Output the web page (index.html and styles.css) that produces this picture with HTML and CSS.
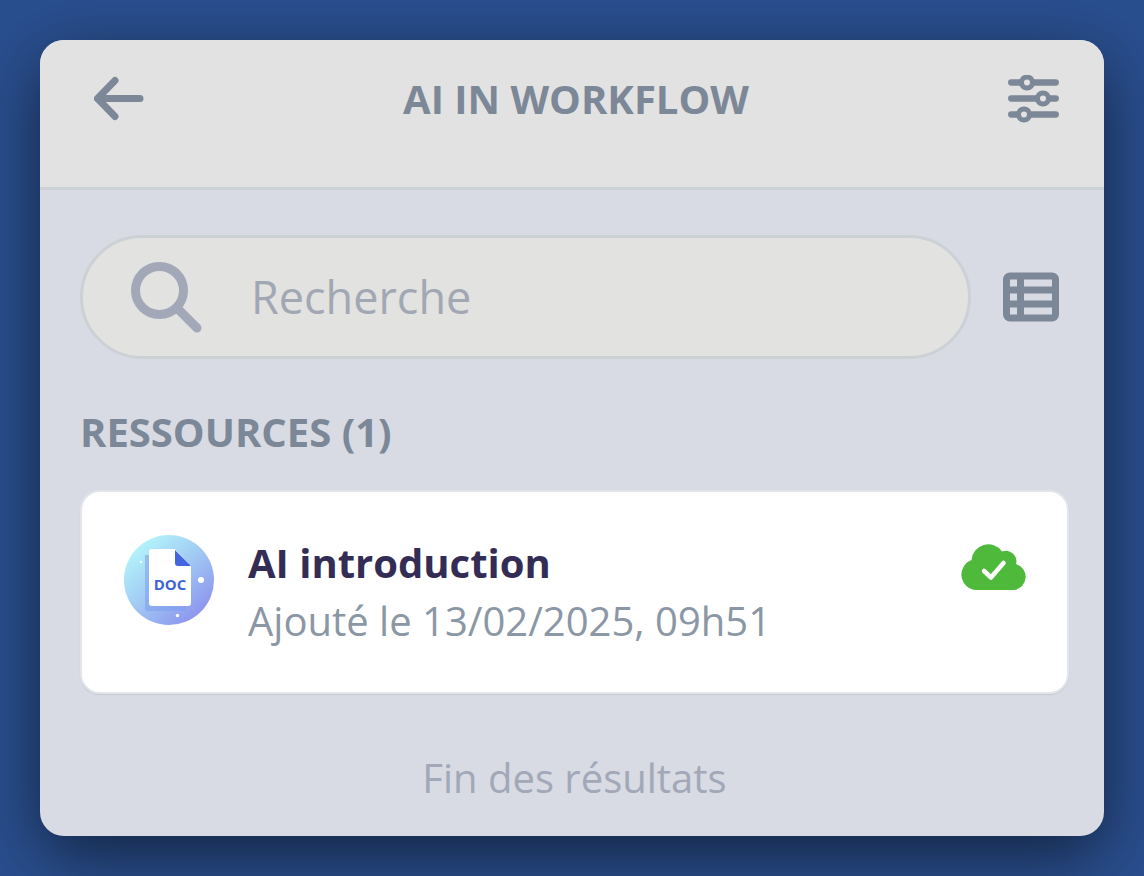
FILE: index.html
```
<!DOCTYPE html>
<html lang="fr">
<head>
	<title>AI in workflow</title>
	<meta charset="UTF-8">
	<link rel="stylesheet" href="styles.css">
</head>
<body>

<main class="panel">
	<header class="topbar">
		<button class="icon-button" type="button" aria-label="Retour">
			<svg width="50" height="48" viewBox="0 0 50 48" fill="none" stroke="currentColor" stroke-width="7" stroke-linecap="round" stroke-linejoin="round">
				<path d="M46 23.500H3.500M21 5.500 3.500 23.500l17.500 18"/>
			</svg>
		</button>
		<h1>AI IN WORKFLOW</h1>
		<button class="icon-button" type="button" aria-label="Filtres">
			<svg width="51" height="48" viewBox="0 0 51 48" fill="none" stroke="currentColor" stroke-width="6.3" stroke-linecap="round">
				<path d="M3.2 7.500H12M27 7.500H47.8M3.2 23.500H28M43 23.500H47.8M3.2 39.500H9M24 39.500H47.8"/>
				<g stroke-width="5">
					<circle cx="19" cy="7.500" r="5.500"/>
					<circle cx="35" cy="23.500" r="5.500"/>
					<circle cx="16" cy="39.500" r="5.500"/>
				</g>
			</svg>
		</button>
	</header>

	<section class="content">
		<div class="search-row">
			<label class="search">
				<svg width="71" height="71" viewBox="0 0 71 71" fill="none" stroke="currentColor" stroke-linecap="round">
					<circle cx="28.5" cy="28.5" r="24" stroke-width="9"/>
					<path d="M47 47 66 66" stroke-width="9"/>
				</svg>
				<input type="search" placeholder="Recherche" aria-label="Recherche">
			</label>
			<button class="icon-button" type="button" aria-label="Affichage en liste">
				<svg width="56" height="50" viewBox="0 0 56 50">
					<path fill="currentColor" fill-rule="evenodd" d="M7 .5H49a7 7 0 0 1 7 7V42.500a7 7 0 0 1-7 7H7a7 7 0 0 1-7-7V7.500a7 7 0 0 1 7-7zM7 7.500v7h7v-7zM21 7.500v7h28v-7zM7 21.500v7h7v-7zM21 21.500v7h28v-7zM7 35.500v7h7v-7zM21 35.500v7h28v-7z"/>
				</svg>
			</button>
		</div>

		<h2>RESSOURCES (1)</h2>

		<a class="card" href="#">
			<svg width="90" height="92" viewBox="0 -1 90 92">
				<defs>
					<linearGradient id="disc" x1="0.15" y1="0.1" x2="0.85" y2="0.9">
						<stop offset="0" stop-color="#b3f5fb"/>
						<stop offset="0.5" stop-color="#a0c8f3"/>
						<stop offset="1" stop-color="#8c93ee"/>
					</linearGradient>
				</defs>
				<circle cx="45" cy="45" r="45" fill="url(#disc)"/>
				<path d="M25 20h-4v53a3 3 0 0 0 3 3h38v-6z" fill="#7d9cec" opacity="0.55"/>
				<path d="M28 14H51L67 31V68a3 3 0 0 1-3 3H28a3 3 0 0 1-3-3V17a3 3 0 0 1 3-3z" fill="#fff"/>
				<path d="M51 15 67 31H54a3 3 0 0 1-3-3z" fill="#4266e0"/>
				<circle cx="77" cy="45" r="3" fill="#fff"/>
				<circle cx="53.500" cy="80.500" r="1.700" fill="#fff"/>
				<circle cx="17" cy="27" r="1.300" fill="#e4fbff"/>
				<text class="doc-label" x="46" y="55" text-anchor="middle">DOC</text>
			</svg>
			<div class="infos">
				<h3>AI introduction</h3>
				<p>Ajouté le 13/02/2025, 09h51</p>
			</div>
			<svg width="66" height="66" viewBox="0 0 66 66">
				<path fill="#4fb93c" d="M15 56A15.500 15.500 0 0 1 10.500 26A16.800 16.800 0 0 1 41 17.500A10.500 10.500 0 0 1 55 30A13.300 13.300 0 0 1 53 56z"/>
				<path d="M23 37 30 43.500 42.500 29" fill="none" stroke="#fff" stroke-width="4.500" stroke-linecap="round" stroke-linejoin="round"/>
			</svg>
		</a>

		<p class="end">Fin des résultats</p>
	</section>
</main>

</body>
</html>
```
FILE: styles.css
```
* {
	box-sizing: border-box;
}
body {
	margin: 0;
	padding: 40px;
	min-height: 100vh;
	background: #2a4f8f;
	font-family: "Open Sans", sans-serif;
	font-size: 40px;
	line-height: 58px;
	color: #7c8797;
}
h1, h2, h3, p {
	margin: 0;
	font-size: 40px;
}
.panel {
	background: #d8dbe3;
	border-radius: 24px;
	overflow: hidden;
	box-shadow: 0 20px 68px rgba(0, 0, 0, 0.55);
}
.topbar {
	display: flex;
	align-items: center;
	justify-content: space-between;
	padding: 30px 45px 59px 54px;
	background: #e2e2e2;
	border-bottom: 3px solid #ccd1d5;
}
.icon-button {
	display: flex;
	padding: 0;
	border: 0;
	background: none;
	color: #7c8797;
	cursor: pointer;
}
.content {
	padding: 45px 35px 29px 40px;
}
.search-row {
	display: flex;
	align-items: center;
	gap: 32px;
	padding-right: 10px;
}
.search {
	flex: 1;
	display: flex;
	align-items: center;
	gap: 49px;
	height: 124px;
	padding: 0 48px;
	border: 3px solid #ccd1d5;
	border-radius: 62px;
	background: #e2e2e1;
	color: #a2a8b7;
}
.search svg {
	flex: none;
}
.search input {
	flex: 1;
	min-width: 0;
	padding: 0;
	border: 0;
	outline: 0;
	background: none;
	font: inherit;
	font-size: 45px;
	color: #7c8797;
}
.search input::placeholder {
	color: #a2a8b3;
	opacity: 1;
}
h2 {
	margin: 44px 0 29px;
}
.card {
	display: flex;
	align-items: flex-start;
	gap: 34px;
	padding: 42px 40px 42px 42px;
	border: 2px solid #e3e5ea;
	border-radius: 20px;
	background: #fff;
	box-shadow: 0 1px 1px #c4c9d0;
	color: #8b97a5;
	text-decoration: none;
}
.card svg {
	flex: none;
}
.doc-label {
	font-size: 15px;
	font-weight: 700;
	fill: #4063d8;
}
.infos {
	flex: 1;
}
.infos h3 {
	color: #332c55;
}
.end {
	margin-top: 55px;
	text-align: center;
	color: #a2a8b7;
}
```
